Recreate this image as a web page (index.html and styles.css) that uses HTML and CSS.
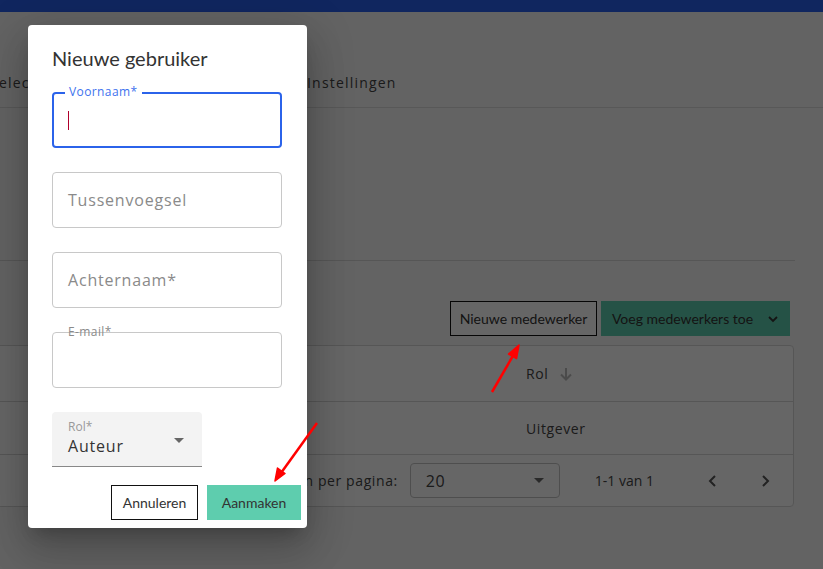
FILE: index.html
```html
<!DOCTYPE html>
<html lang="nl">
<head>
  <meta charset="UTF-8" />
  <title>Nieuwe gebruiker</title>
  <link rel="stylesheet" href="styles.css">
</head>
<body>
  <div class="topbar"></div>

  <div class="tabs">
    <span class="tab">Selecties</span>
    <span class="tab">Medewerkers</span>
    <span class="tab">Instellingen</span>
  </div>

  <div class="page">
    <div class="intro"></div>

    <div class="toolbar">
      <button class="btn btn-outline">Nieuwe medewerker</button>
      <button class="btn btn-green">Voeg medewerkers toe
        <svg width="12" height="8" viewBox="0 0 12 8"><path d="M2 2l4 4 4-4" fill="none" stroke="#333" stroke-width="1.8"/></svg>
      </button>
    </div>

    <div class="card">
      <div class="row head">
        <div class="spacer"></div>
        <div class="cell">Rol
          <svg class="sort" width="16" height="16" viewBox="0 0 16 16"><path d="M8 2v11M3 8.5l5 5 5-5" fill="none" stroke="#bbb" stroke-width="2"/></svg>
        </div>
      </div>
      <div class="row body">
        <div class="spacer"></div>
        <div class="cell">Uitgever</div>
      </div>
      <div class="row foot">
        <span class="foot-label">Rijen per pagina:</span>
        <div class="per-page">
          <span>20</span>
          <span class="caret"></span>
        </div>
        <span class="range">1-1 van 1</span>
        <span class="nav"><svg width="10" height="14" viewBox="0 0 10 14"><path d="M7 2L2 7l5 5" fill="none" stroke="#555" stroke-width="2"/></svg></span>
        <span class="nav"><svg width="10" height="14" viewBox="0 0 10 14"><path d="M3 2l5 5-5 5" fill="none" stroke="#555" stroke-width="2"/></svg></span>
      </div>
    </div>
  </div>

  <div class="overlay"></div>

  <div class="dialog">
    <h2 class="dialog-title">Nieuwe gebruiker</h2>

    <div class="field focused">
      <label>Voornaam*</label>
      <span class="cursor"></span>
    </div>
    <div class="field">
      <span class="placeholder">Tussenvoegsel</span>
    </div>
    <div class="field">
      <span class="placeholder">Achternaam*</span>
    </div>
    <div class="field email">
      <label>E-mail*</label>
    </div>

    <div class="select">
      <span class="select-label">Rol*</span>
      <span class="select-value">Auteur</span>
      <span class="caret"></span>
    </div>

    <div class="actions">
      <button class="btn btn-outline">Annuleren</button>
      <button class="btn btn-green">Aanmaken</button>
    </div>
  </div>

  <svg class="arrows" width="823" height="569" viewBox="0 0 823 569">
    <path d="M492 392L514 354" stroke="#f00" stroke-width="2.5" fill="none"/>
    <path d="M519 345L516.5 358.5L508.5 354Z" fill="#f00" stroke="#f00" stroke-width="1.5" stroke-linejoin="round"/>
    <path d="M317 423L281 473" stroke="#f00" stroke-width="2.5" fill="none"/>
    <path d="M275 481L277.5 468L285 473.5Z" fill="#f00" stroke="#f00" stroke-width="1.5" stroke-linejoin="round"/>
  </svg>
</body>
</html>
```

FILE: styles.css
```css
html, body { margin: 0; padding: 0; }
body {
  width: 823px;
  height: 569px;
  overflow: hidden;
  position: relative;
  background: #f7f7f7;
  font-family: "Open Sans", sans-serif;
  color: #444;
}

.topbar { height: 12px; background: #2860ee; }

.tabs {
  height: 96px;
  box-sizing: border-box;
  display: grid;
  grid-template-columns: 150px 167px auto;
  align-items: end;
  padding-bottom: 14px;
  margin-left: -10px;
  border-bottom: 1px solid #dcdcdc;
  font-size: 14px;
  line-height: 20px;
  letter-spacing: 1.2px;
  color: #444;
  white-space: nowrap;
}

.page { margin-left: -20px; margin-right: 28px; }
.intro { height: 152px; border-bottom: 1px solid #d8d8d8; }

.toolbar { display: flex; justify-content: flex-end; gap: 4px; margin-top: 40px; padding-right: 5px; }

.btn {
  height: 35px;
  padding: 0;
  font-family: "Lato", sans-serif;
  font-size: 14px;
  color: #333;
  border: 0;
  white-space: nowrap;
  cursor: pointer;
  display: inline-flex;
  align-items: center;
  justify-content: center;
}
.btn-outline { background: #fff; border: 1px solid #111; }
.btn-green { background: #5ecdae; }
.toolbar .btn-outline { width: 147px; }
.toolbar .btn-green { width: 189px; gap: 14px; }

.card {
  margin-top: 9px;
  margin-right: 1px;
  background: #fff;
  border: 1px solid #d8d8d8;
  border-radius: 4px;
}
.row { display: flex; align-items: center; border-bottom: 1px solid #d8d8d8; font-size: 14px; letter-spacing: 0.6px; }
.row:last-child { border-bottom: 0; }
.row.head { height: 55px; }
.row.body { height: 52px; }
.row.foot { height: 51px; justify-content: flex-end; }
.spacer { width: 529px; }
.cell { padding-left: 16px; display: flex; align-items: center; gap: 10px; color: #444; }
.sort { margin-top: 1px; }

.foot-label { color: #444; }
.per-page {
  width: 118px;
  height: 33px;
  margin-left: 12px;
  border: 1px solid #c4c4c4;
  border-radius: 4px;
  display: flex;
  align-items: center;
  justify-content: space-between;
  padding: 0 15px;
  font-size: 16px;
}
.range { margin-left: 35px; margin-right: 39px; letter-spacing: 0; }
.nav { width: 40px; display: inline-flex; justify-content: center; }
.nav + .nav { margin-left: 12px; margin-right: 8px; }

.caret {
  width: 0;
  height: 0;
  border-left: 5px solid transparent;
  border-right: 5px solid transparent;
  border-top: 5px solid #666;
}

.overlay { position: absolute; inset: 0; background: rgba(0, 0, 0, 0.6); }

.dialog {
  position: absolute;
  left: 28px;
  top: 25px;
  width: 279px;
  height: 503px;
  box-sizing: border-box;
  padding: 17px 6px 0 24px;
  background: #fff;
  border-radius: 4px;
  box-shadow: 0 11px 15px -7px rgba(0,0,0,.2), 0 24px 38px 3px rgba(0,0,0,.14), 0 9px 46px 8px rgba(0,0,0,.12);
}
.dialog-title {
  margin: 0 0 18px;
  font-family: "Lato", sans-serif;
  font-weight: 400;
  font-size: 20px;
  line-height: 32px;
  color: #333;
}

.field {
  position: relative;
  width: 230px;
  height: 56px;
  box-sizing: border-box;
  border: 1px solid #c8c8c8;
  border-radius: 4px;
  margin-bottom: 24px;
  display: flex;
  align-items: center;
  padding-left: 15px;
}
.placeholder { font-size: 16px; letter-spacing: 0.8px; color: #8a8a8a; }
.field label { position: absolute; left: 15px; top: -9px; font-size: 12px; line-height: 16px; letter-spacing: 0.4px; color: #8a8a8a; }
.field.focused { border: 2px solid #2b63ea; padding-left: 14px; }
.field.focused label { left: 11px; top: -10px; padding: 0 4px; background: #fff; color: #3d72ee; }
.cursor { width: 1px; height: 19px; background: #b0002c; }

.select {
  position: relative;
  width: 150px;
  height: 55px;
  box-sizing: border-box;
  background: #f3f3f3;
  border-radius: 4px 4px 0 0;
  border-bottom: 1px solid #888;
  padding: 7px 16px 0;
  display: flex;
  flex-direction: column;
}
.select-label { font-size: 12px; line-height: 16px; color: #999; }
.select-value { font-size: 16px; line-height: 22px; letter-spacing: 0.8px; color: #333; }
.select .caret { position: absolute; right: 18px; top: 26px; }

.actions { display: flex; justify-content: flex-end; gap: 9px; margin-top: 18px; }
.actions .btn-outline { width: 87px; }
.actions .btn-green { width: 94px; }

.arrows { position: absolute; left: 0; top: 0; pointer-events: none; }
```
